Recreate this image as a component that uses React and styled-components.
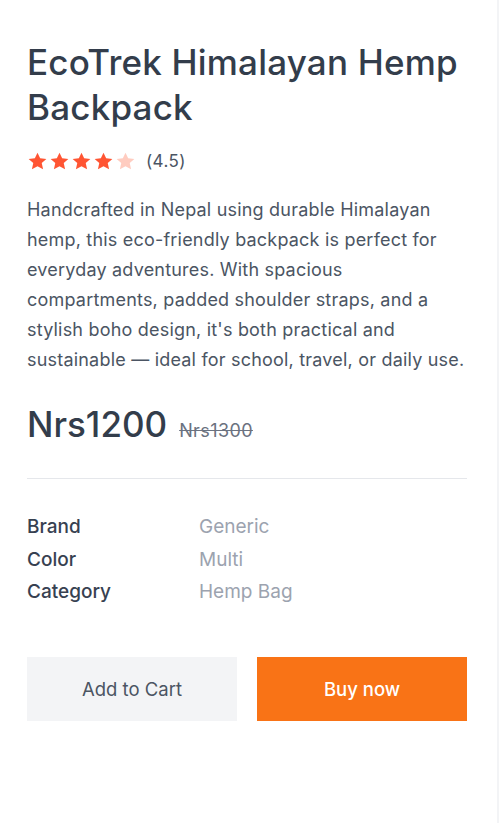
import React from "react";
import styled, { createGlobalStyle } from "styled-components";

const Global = createGlobalStyle`
  html, body { margin: 0; padding: 0; background: #fff; }
  body { font-family: "Inter", "Noto Sans", sans-serif; }
  * { box-sizing: border-box; }
`;

const Page = styled.div`
  width: 499px;
  min-height: 823px;
  border-right: 2px solid #f3f4f6;
  padding: 40px 30px 0 27px;
  color: #374151;
`;

const Title = styled.h1`
  margin: 0;
  font-size: 35px;
  line-height: 45px;
  font-weight: 500;
  letter-spacing: 0.2px;
  color: #333d4b;
`;

const RatingRow = styled.div`
  display: flex;
  align-items: center;
  gap: 11px;
  margin-top: 21px;
  padding-left: 1px;
`;

const Stars = styled.div`
  display: flex;
  gap: 3px;
`;

const RatingText = styled.span`
  font-size: 17px;
  letter-spacing: 0.4px;
  color: #4b5563;
`;

const Description = styled.p`
  margin: 24px 0 0;
  font-size: 18px;
  line-height: 30px;
  letter-spacing: 0.2px;
  color: #4b5563;
`;

const PriceRow = styled.div`
  display: flex;
  align-items: baseline;
  gap: 12px;
  margin-top: 28px;
`;

const Price = styled.span`
  font-size: 35px;
  font-weight: 500;
  color: #333d4b;
`;

const OldPrice = styled.span`
  font-size: 18px;
  letter-spacing: 0.4px;
  color: #6b7280;
  text-decoration: line-through;
`;

const Divider = styled.hr`
  border: 0;
  border-top: 1px solid #e5e7eb;
  margin: 33px 0 0;
`;

const Specs = styled.div`
  display: grid;
  grid-template-columns: 172px 1fr;
  margin-top: 32px;
  font-size: 19px;
  line-height: 32.5px;
`;

const Label = styled.span`
  font-weight: 500;
  color: #374151;
`;

const Value = styled.span`
  color: #9ca3af;
`;

const Actions = styled.div`
  display: grid;
  grid-template-columns: 1fr 1fr;
  gap: 20px;
  margin-top: 48px;
`;

const Button = styled.button`
  height: 64px;
  border: 0;
  font-family: inherit;
  font-size: 18.5px;
  font-weight: ${(p) => (p.$primary ? 500 : 400)};
  background: ${(p) => (p.$primary ? "#f97316" : "#f3f4f6")};
  color: ${(p) => (p.$primary ? "#ffffff" : "#4b5563")};
  cursor: pointer;
`;

const Star = ({ color }) => (
  <svg width="19" height="19" viewBox="0 0 24 24">
    <path
      fill={color}
      d="M12 .8l3.35 7.1 7.85.85-5.85 5.3 1.7 7.75L12 17.9l-7.05 3.9 1.7-7.75L.8 8.75l7.85-.85z"
    />
  </svg>
);

export default function App() {
  return (
    <>
      <Global />
      <Page>
        <Title>EcoTrek Himalayan Hemp Backpack</Title>
        <RatingRow>
          <Stars>
            {[0, 1, 2, 3].map((i) => (
              <Star key={i} color="#ff5533" />
            ))}
            <Star color="#ffccc0" />
          </Stars>
          <RatingText>(4.5)</RatingText>
        </RatingRow>
        <Description>
          Handcrafted in Nepal using durable Himalayan hemp, this eco-friendly
          backpack is perfect for everyday adventures. With spacious
          compartments, padded shoulder straps, and a stylish boho design, it's
          both practical and sustainable — ideal for school, travel, or daily
          use.
        </Description>
        <PriceRow>
          <Price>Nrs1200</Price>
          <OldPrice>Nrs1300</OldPrice>
        </PriceRow>
        <Divider />
        <Specs>
          <Label>Brand</Label>
          <Value>Generic</Value>
          <Label>Color</Label>
          <Value>Multi</Value>
          <Label>Category</Label>
          <Value>Hemp Bag</Value>
        </Specs>
        <Actions>
          <Button>Add to Cart</Button>
          <Button $primary>Buy now</Button>
        </Actions>
      </Page>
    </>
  );
}
